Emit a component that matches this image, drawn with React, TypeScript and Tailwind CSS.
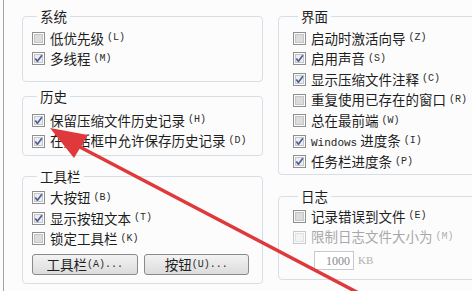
import React from 'react';

const CJK = "font-['Noto_Sans_CJK_SC','Noto_Sans',sans-serif]";

function Box({ checked, disabled }: { checked?: boolean; disabled?: boolean }) {
  const outer = disabled ? '#c9c9c9' : '#8e8f8f';
  const inner = disabled ? '#f3f3f3' : checked ? '#eeeeee' : '#dcdcdc';
  return (
    <svg width="13" height="13" viewBox="0 0 13 13" className="shrink-0">
      <rect x="0.5" y="0.5" width="12" height="12" fill="#fbfbfb" stroke={outer} />
      <rect x="2.5" y="2.5" width="8" height="8" fill={inner} stroke={disabled ? '#e2e2e2' : '#c6c6c6'} />
      {checked && (
        <path d="M3.3 6.4 L5.4 9.2 L9.9 3.2" stroke="#4b5f9c" strokeWidth="1.7" fill="none" strokeLinejoin="round" />
      )}
    </svg>
  );
}

interface CheckProps {
  label: React.ReactNode;
  k: string;
  checked?: boolean;
  disabled?: boolean;
  h?: string;
}

function Check({ label, k, checked, disabled, h = 'h-[20.6px]' }: CheckProps) {
  return (
    <div className={`flex items-center ${h}`}>
      <Box checked={checked} disabled={disabled} />
      <span
        className={`ml-[5px] text-[13.5px] leading-none whitespace-nowrap ${CJK} ${
          disabled ? 'text-[#a8a8a8]' : 'text-[#1e1e1e]'
        }`}
      >
        {label}
      </span>
      <span
        className={`ml-[3px] font-['Liberation_Mono',monospace] text-[10px] leading-none whitespace-nowrap ${
          disabled ? 'text-[#b0b0b0]' : 'text-[#2a2a2a]'
        }`}
      >
        ({k})
      </span>
    </div>
  );
}

function Group({ title, className, children }: { title: string; className?: string; children: React.ReactNode }) {
  return (
    <fieldset className={`border border-[#d5dfe5] rounded-[4px] ${className ?? ''}`}>
      <legend className={`ml-[5px] px-[3px] text-[13.5px] leading-[14px] text-[#1e1e1e] ${CJK}`}>{title}</legend>
      {children}
    </fieldset>
  );
}

function Btn({ label, k }: { label: string; k: string }) {
  return (
    <button className="flex-1 h-[21px] flex items-center justify-center border border-[#8a8a8a] rounded-[3px] bg-gradient-to-b from-[#f3f3f3] to-[#dcdcdc]">
      <span className={`text-[13.5px] leading-none text-[#1e1e1e] ${CJK}`}>{label}</span>
      <span className="font-['Liberation_Mono',monospace] text-[10px] leading-none text-[#2a2a2a]">({k})...</span>
    </button>
  );
}

export default function App() {
  return (
    <div className="relative w-[472px] h-[291px] overflow-hidden bg-[#fcfcfc]">
      <div className="ml-[3px] h-full border-l border-[#a3a3a3] pl-[18px] flex gap-[15px]">
        {/* left column */}
        <div className="w-[241px] shrink-0 flex flex-col pt-[9px]">
          <Group title="系统" className="pt-[5px] pb-[12px] pl-[9px]">
            <Check label="低优先级" k="L" />
            <Check label="多线程" k="M" checked />
          </Group>
          <Group title="历史" className="mt-[7px] pt-[7px] pb-[4px] pl-[9px]">
            <Check label="保留压缩文件历史记录" k="H" checked />
            <Check label="在对话框中允许保存历史记录" k="D" checked />
          </Group>
          <Group title="工具栏" className="mt-[13px] pt-[4px] pb-[8px] pl-[9px] pr-[13px]">
            <Check label="大按钮" k="B" checked />
            <Check label="显示按钮文本" k="T" checked />
            <Check label="锁定工具栏" k="K" />
            <div className="flex gap-[6px] mt-[5px]">
              <Btn label="工具栏" k="A" />
              <Btn label="按钮" k="U" />
            </div>
          </Group>
        </div>

        {/* right column */}
        <div className="w-[240px] shrink-0 flex flex-col pt-[9px]">
          <Group title="界面" className="pt-[5px] pb-[2px] pl-[14px]">
            <Check label="启动时激活向导" k="Z" />
            <Check label="启用声音" k="S" checked />
            <Check label="显示压缩文件注释" k="C" checked />
            <Check label="重复使用已存在的窗口" k="R" />
            <Check label="总在最前端" k="W" />
            <Check
              label={
                <>
                  <span className="font-['Liberation_Mono',monospace] text-[11px]">Windows</span> 进度条
                </>
              }
              k="I"
              checked
            />
            <Check label="任务栏进度条" k="P" checked />
          </Group>
          <Group title="日志" className="mt-[14px] pt-[3px] pb-[9px] pl-[14px]">
            <Check label="记录错误到文件" k="E" />
            <Check label="限制日志文件大小为" k="M" disabled />
            <div className="flex items-center mt-[4px] ml-[21px]">
              <div className="w-[40px] h-[19px] border border-[#c5cad2] bg-white flex items-center justify-end pr-[3px]">
                <span className="font-['Liberation_Serif',serif] text-[12px] leading-none text-[#8a8a8a]">1000</span>
              </div>
              <span className="ml-[4px] font-['Liberation_Serif',serif] text-[11px] leading-none text-[#b0b0b0]">KB</span>
            </div>
          </Group>
        </div>
      </div>

      {/* red annotation arrow */}
      <svg className="absolute inset-0 pointer-events-none" width="472" height="291" viewBox="0 0 472 291">
        <line x1="370" y1="299" x2="78" y2="146" stroke="#e0393b" strokeWidth="3.5" strokeLinecap="round" />
        <polygon points="50,128 88,135 74,158" fill="#e0393b" />
      </svg>
    </div>
  );
}
